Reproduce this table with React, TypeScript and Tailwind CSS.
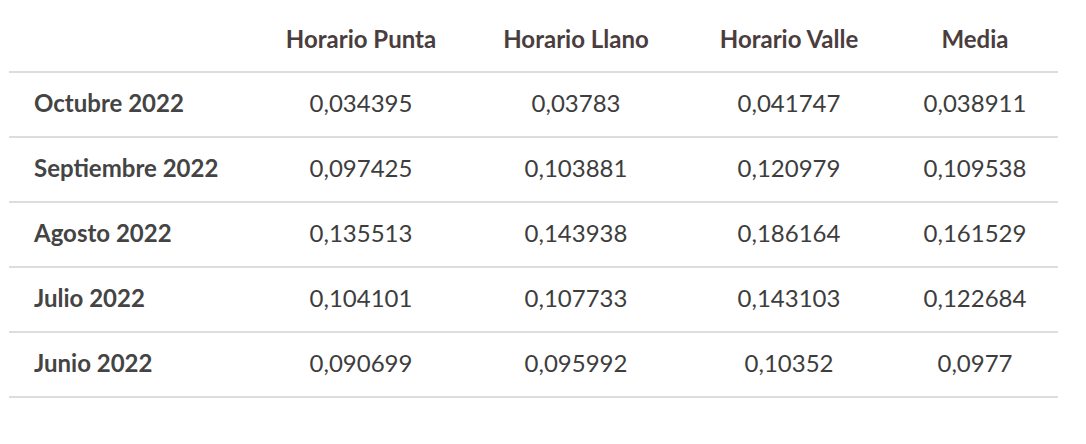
const headers = ["Horario Punta", "Horario Llano", "Horario Valle", "Media"];

const rows = [
  { month: "Octubre 2022", values: ["0,034395", "0,03783", "0,041747", "0,038911"] },
  { month: "Septiembre 2022", values: ["0,097425", "0,103881", "0,120979", "0,109538"] },
  { month: "Agosto 2022", values: ["0,135513", "0,143938", "0,186164", "0,161529"] },
  { month: "Julio 2022", values: ["0,104101", "0,107733", "0,143103", "0,122684"] },
  { month: "Junio 2022", values: ["0,090699", "0,095992", "0,10352", "0,0977"] },
];

export default function App() {
  return (
    <div className="bg-white w-[1086px] h-[444px] pl-[9px] font-['Lato',_sans-serif]">
      <table className="w-[1049px] table-fixed border-collapse text-[24px]">
        <colgroup>
          <col className="w-[247px]" />
          <col className="w-[210px]" />
          <col className="w-[220px]" />
          <col className="w-[206px]" />
          <col className="w-[166px]" />
        </colgroup>
        <thead>
          <tr className="h-[72px] border-b-2 border-[#dddddd]">
            <th />
            {headers.map((h) => (
              <th key={h} className="text-center font-bold text-[#4a3d3d] pt-[6px]">
                {h}
              </th>
            ))}
          </tr>
        </thead>
        <tbody>
          {rows.map((row) => (
            <tr key={row.month} className="h-[65px] border-b-2 border-[#dddddd]">
              <td className="pl-[25px] font-bold text-[#444444] pb-[4px]">{row.month}</td>
              {row.values.map((v, i) => (
                <td key={i} className="text-center font-normal text-[#3d3d3d] pb-[4px]">
                  {v}
                </td>
              ))}
            </tr>
          ))}
        </tbody>
      </table>
    </div>
  );
}
